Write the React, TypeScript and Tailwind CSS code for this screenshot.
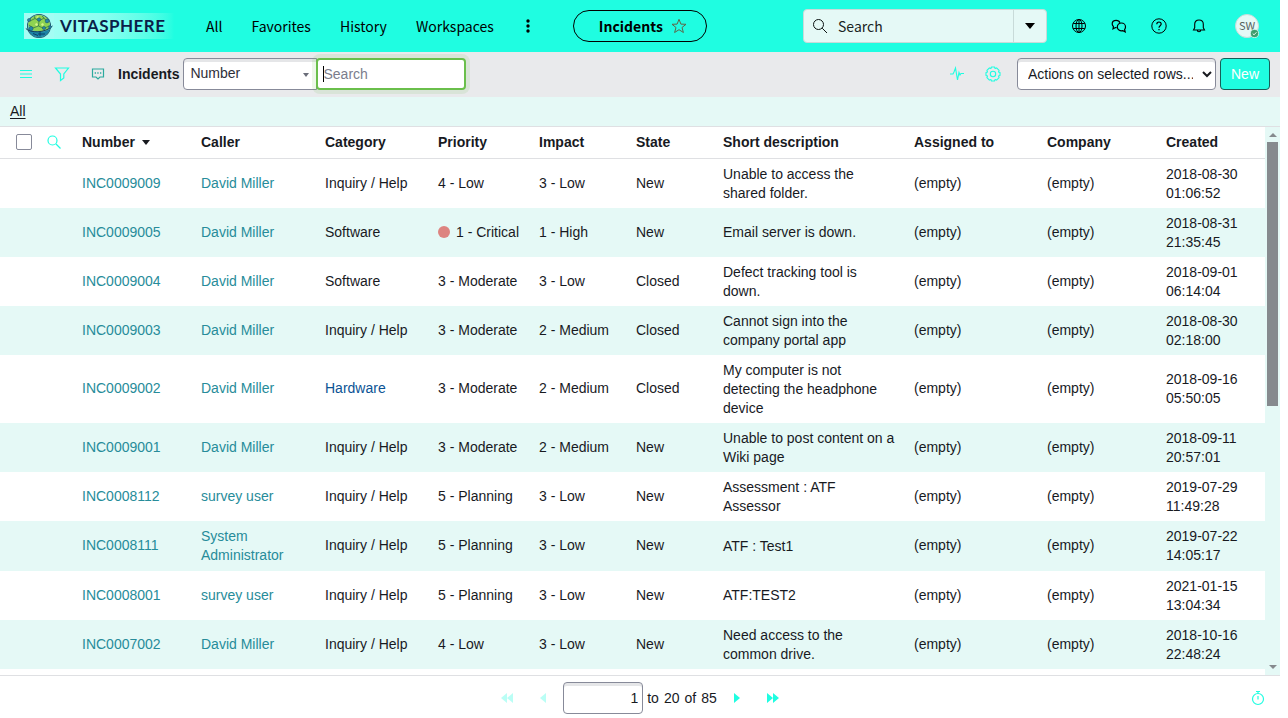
import React from "react";

const rows = [
  ["INC0009009", "David Miller", "Inquiry / Help", "4 - Low", "3 - Low", "New", "Unable to access the shared folder.", "2018-08-30 01:06:52"],
  ["INC0009005", "David Miller", "Software", "1 - Critical", "1 - High", "New", "Email server is down.", "2018-08-31 21:35:45"],
  ["INC0009004", "David Miller", "Software", "3 - Moderate", "3 - Low", "Closed", "Defect tracking tool is down.", "2018-09-01 06:14:04"],
  ["INC0009003", "David Miller", "Inquiry / Help", "3 - Moderate", "2 - Medium", "Closed", "Cannot sign into the company portal app", "2018-08-30 02:18:00"],
  ["INC0009002", "David Miller", "Hardware", "3 - Moderate", "2 - Medium", "Closed", "My computer is not detecting the headphone device", "2018-09-16 05:50:05"],
  ["INC0009001", "David Miller", "Inquiry / Help", "3 - Moderate", "2 - Medium", "New", "Unable to post content on a Wiki page", "2018-09-11 20:57:01"],
  ["INC0008112", "survey user", "Inquiry / Help", "5 - Planning", "3 - Low", "New", "Assessment : ATF Assessor", "2019-07-29 11:49:28"],
  ["INC0008111", "System Administrator", "Inquiry / Help", "5 - Planning", "3 - Low", "New", "ATF : Test1", "2019-07-22 14:05:17"],
  ["INC0008001", "survey user", "Inquiry / Help", "5 - Planning", "3 - Low", "New", "ATF:TEST2", "2021-01-15 13:04:34"],
  ["INC0007002", "David Miller", "Inquiry / Help", "4 - Low", "3 - Low", "New", "Need access to the common drive.", "2018-10-16 22:48:24"],
];

const headings = ["Caller", "Category", "Priority", "Impact", "State", "Short description", "Assigned to", "Company", "Created"];

function Icon({ className = "size-4", strokeWidth = 1, children }: { className?: string; strokeWidth?: number; children: React.ReactNode }) {
  return (
    <svg viewBox="0 0 16 16" className={className} fill="none" stroke="currentColor" strokeWidth={strokeWidth} aria-hidden="true">
      {children}
    </svg>
  );
}

function IconButton({ label, className, children }: { label: string; className: string; children: React.ReactNode }) {
  return (
    <button type="button" aria-label={label} className={`flex shrink-0 items-center justify-center ${className}`}>
      {children}
    </button>
  );
}

function Logo() {
  return (
    <a href="#" className="flex h-[26px] w-[150px] shrink-0 items-center bg-linear-to-r from-[#a9fff5] via-[#8cfff1] to-[#1ffde1]">
      <svg viewBox="0 0 30 26" className="h-[26px] w-[30px] shrink-0" aria-hidden="true">
        <rect width="30" height="26" fill="#a4fdf4" />
        <circle cx="15" cy="13" r="12" fill="#174a63" />
        <circle cx="15" cy="13" r="11.2" fill="#62c3c9" />
        <path d="M4 11C6 4 12 1.800 15 1.900C20 1.900 25 5.500 26 11L24 17L15 18.500L6 17Z" fill="#8fd352" />
        <path d="M4 16C10 19.500 19 20 26 16C24 21 20 24.200 15 24.200C10 24.200 6 21 4 16Z" fill="#1b83a6" />
        <path d="M6 8L11 5.500L15 8L20 5L24 10M15 8L14.500 13L9 15L5 12M14.500 13L20 15.500L25 13M11 5.500L10 3M20 5L18 3" stroke="#2a6a4c" strokeWidth=".7" fill="none" />
        <path d="M1.800 15.500C6 20 21 20.500 28.500 13" stroke="#123d59" strokeWidth="1" fill="none" />
        <path d="M9 20.500L14 22.500M14 21L21 21M16 19v4" stroke="#0b3f68" strokeWidth="1" />
        <g fill="#2388a8" stroke="#123d59" strokeWidth=".4">
          <circle cx="5" cy="7" r="1.600" /><circle cx="15" cy="6.500" r="1.700" /><circle cx="7" cy="15.500" r="2.100" />
          <circle cx="23" cy="8" r="1.900" /><circle cx="26" cy="14" r="1.400" /><circle cx="20" cy="15" r="1.600" />
        </g>
        <path d="M11 11l2-1 1 2-2 1zM17 11l2-1 1 2-2 1zM12 4l2-1 1 1-2 1z" fill="#d6f58a" />
      </svg>
      <span className="pl-[6px] font-['Lato'] text-[17px] leading-5 font-bold tracking-wide text-[#0b1f49]">VITASPHERE</span>
    </a>
  );
}

function TopBar() {
  return (
    <header className="flex h-[52px] shrink-0 items-center bg-[#1ffde1] pl-6 font-['Noto_Sans_CJK_SC',sans-serif] text-sm text-[#0b1211]">
      <Logo />
      <nav className="ml-8 flex items-center gap-[29px] whitespace-nowrap text-black">
        <a href="#">All</a>
        <a href="#">Favorites</a>
        <a href="#">History</a>
        <a href="#">Workspaces</a>
        <IconButton label="More" className="w-[10px]">
          <svg viewBox="0 0 4 14" className="h-[14px] w-1" fill="currentColor" aria-hidden="true">
            <circle cx="2" cy="2" r="1.700" /><circle cx="2" cy="7" r="1.700" /><circle cx="2" cy="12" r="1.700" />
          </svg>
        </IconButton>
      </nav>
      <button type="button" className="ml-10 flex h-8 w-[134px] shrink-0 items-center justify-center gap-2 rounded-full border border-black pl-[6px] font-bold text-black">
        Incidents
        <Icon className="size-4 text-[#5f6548]">
          <path d="M8 1.300L9.900 6.100L15 6.300L11 9.500L12.400 14.500L8 11.700L3.600 14.500L5 9.500L1 6.300L6.100 6.100Z" />
        </Icon>
      </button>
      <div className="ml-auto flex h-[34px] w-[244px] shrink-0 items-stretch rounded border border-[#c8dbd9] bg-[#e5f9f6]">
        <label className="flex min-w-0 flex-1 items-center gap-[10px] pl-2">
          <Icon className="size-4 shrink-0"><circle cx="6.500" cy="6.500" r="5" /><path d="M10.200 10.200L15 15" /></Icon>
          <input aria-label="Global search" placeholder="Search" className="w-full min-w-0 bg-transparent outline-none placeholder:text-[#1a2423]" />
        </label>
        <IconButton label="Search options" className="w-[33px] border-l border-[#c8dbd9]">
          <svg viewBox="0 0 10 6" className="h-[6px] w-[10px]" fill="black" aria-hidden="true"><path d="M0 0h10L5 6z" /></svg>
        </IconButton>
      </div>
      <div className="ml-4 flex shrink-0 items-center text-black">
        <IconButton label="Language" className="size-8">
          <Icon><circle cx="8" cy="8" r="6.500" /><ellipse cx="8" cy="8" rx="3" ry="6.500" /><path d="M8 1.500v13M2.200 5.500h11.600M2.200 10.500h11.600" /></Icon>
        </IconButton>
        <IconButton label="Conversations" className="ml-2 size-8">
          <Icon strokeWidth={1.2}><path d="M5.600 9.600L4.500 9.500L2 10.800L2.400 8.500C1.600 7.700 1.200 6.800 1.200 5.900C1.200 3.800 2.900 2.300 5.200 2.300C7 2.300 8.400 3.200 8.900 4.700" /><path d="M10.400 5C12.700 5 14.500 6.700 14.500 8.900C14.500 9.900 14.200 10.700 13.600 11.400L14.200 13.900L11.800 12.700C8.800 13.300 6.300 11.600 6.300 8.900C6.300 6.700 8.100 5 10.400 5Z" /></Icon>
        </IconButton>
        <IconButton label="Help" className="ml-2 size-8">
          <Icon><circle cx="8" cy="8" r="7.200" /><path d="M5.800 6.200C5.800 3.300 10.200 3.300 10.200 6.100C10.200 7.800 8 7.800 8 9.700M8 11v1.300" strokeWidth="1.200" /></Icon>
        </IconButton>
        <IconButton label="Notifications" className="ml-2 size-8">
          <Icon strokeWidth={1.1}><path d="M2.500 12L3.700 9.700V6.200C3.700 3.700 5.500 2 8 2C10.500 2 12.300 3.700 12.300 6.200V9.700L13.500 12ZM6.300 12.300C6.300 14.300 9.700 14.300 9.700 12.300" /></Icon>
        </IconButton>
      </div>
      <button type="button" aria-label="User menu" className="relative mr-[21px] ml-5 flex size-6 shrink-0 items-center justify-center rounded-full border border-[#c8dbd9] bg-[#e5f9f6] text-[11px] text-[#566361]">
        SW
        <svg viewBox="0 0 10 10" className="absolute -right-px -bottom-px size-[9px]" aria-hidden="true">
          <circle cx="5" cy="5" r="4.500" fill="#3c9d6c" stroke="#d3f4ec" /><path d="M3 5l1.500 1.500L7.200 3.600" fill="none" stroke="white" />
        </svg>
      </button>
    </header>
  );
}

function ListToolbar() {
  const field = "h-8 shrink-0 border border-[#878a99] bg-white text-sm shadow-[inset_0_3px_0_#e5e6e8]";
  return (
    <div className="flex h-[45px] shrink-0 items-center bg-[#e9eaec] px-[10px] pb-[2px] text-[#1ffde1]">
      <IconButton label="List menu" className="size-8"><Icon strokeWidth={1.2}><path d="M2 4.500h12M2 8h12M2 11.500h12" /></Icon></IconButton>
      <IconButton label="Filter" className="ml-1 size-8"><Icon strokeWidth={1.2}><path d="M1.500 2h13L9.800 8v4L6.500 14.500V8Z" /></Icon></IconButton>
      <IconButton label="Activity" className="ml-1 size-8 text-[#2baa9e]"><Icon strokeWidth={1.2}><path d="M2.500 3h11v8H10L8 13L6 11H2.500Z" /><path d="M4.700 7h1.300M7.300 7h1.300M10 7h1.300" strokeWidth="1.400" /></Icon></IconButton>
      <h1 className="ml-1 text-sm font-bold text-[#181a1f]">Incidents</h1>
      <div className="relative ml-1 flex">
        <select aria-label="Search field" className={`${field} w-[134px] appearance-none rounded-l px-[6px] pb-[2px] text-[#2e2e38]`}><option>Number</option></select>
        <svg viewBox="0 0 6 4" className="pointer-events-none absolute top-[15px] right-2 h-[4px] w-[6px]" fill="#6a6d79" aria-hidden="true"><path d="M0 0h6L3 4z" /></svg>
      </div>
      <div className="relative flex">
        <input aria-label="Search list" placeholder="Search" className="-ml-px h-8 w-[150px] rounded border-2 border-[#6abf4b] bg-white px-[5px] text-sm text-[#181a1f] shadow-[0_0_0_4px_rgba(106,191,75,0.12)] outline-none placeholder:text-[#7b7d8c]" />
        <span aria-hidden="true" className="absolute top-2 left-[6px] h-4 w-px bg-black" />
      </div>
      <div className="ml-auto flex items-center">
        <IconButton label="Activity stream" className="size-8"><Icon strokeWidth={1.1}><path d="M1 8h3l1-2 1.500-4L8.500 14L10 6.500L11 9l1-1.500h3" /></Icon></IconButton>
        <IconButton label="List settings" className="ml-1 size-8">
          <Icon strokeWidth={1.1}><path d="M6.500 1h3l.6 1.500 1.500-.6 2.500 2.500-.6 1.500L15 6.500v3l-1.500.6.6 1.500-2.500 2.500-1.500-.6L9.500 15h-3l-.6-1.500-1.500.6-2.500-2.500.6-1.500L1 9.500v-3l1.500-.6-.6-1.500 2.500-2.500 1.500.6Z" strokeLinejoin="round" /><circle cx="8" cy="8" r="2.700" /></Icon>
        </IconButton>
      </div>
      <select aria-label="Actions" className={`${field} ml-2 w-[199px] rounded px-[6px] text-[#181a1f]`}><option>Actions on selected rows...</option></select>
      <button type="button" className="ml-1 h-8 w-[50px] shrink-0 rounded border border-[#165f59] bg-[#1ffde1] text-sm text-white">New</button>
    </div>
  );
}

function IncidentTable() {
  return (
    <table className="w-full table-fixed border-collapse text-left text-sm leading-[19px] text-[#181a1f]">
      <colgroup>
        <col className="w-[42px]" /><col className="w-[32px]" /><col className="w-[119px]" /><col className="w-[124px]" />
        <col className="w-[113px]" /><col className="w-[101px]" /><col className="w-[97px]" /><col className="w-[87px]" />
        <col className="w-[191px]" /><col className="w-[133px]" /><col className="w-[119px]" /><col className="w-[107px]" />
      </colgroup>
      <thead>
        <tr className="h-[31px] border-b border-[#dfe0e3]">
          <th className="pl-4"><input type="checkbox" aria-label="Select all rows" className="block size-4 appearance-none rounded-xs border border-[#878a99] bg-white" /></th>
          <th><IconButton label="Search columns" className="ml-1 text-[#1ffde1]"><Icon strokeWidth={1.2}><circle cx="6.500" cy="6.500" r="4.500" /><path d="M10 10L14.500 14.500" /></Icon></IconButton></th>
          <th className="px-2">
            <a href="#" className="flex items-center gap-[7px]">Number
              <svg viewBox="0 0 8 5" className="h-[5px] w-2" fill="currentColor" aria-hidden="true"><path d="M0 0h8L4 5z" /></svg>
            </a>
          </th>
          {headings.map((h) => <th key={h} className="px-2"><a href="#">{h}</a></th>)}
        </tr>
      </thead>
      <tbody>
        {rows.map(([number, caller, category, priority, impact, state, description, created]) => (
          <tr key={number} className="even:bg-[#e5f9f6]">
            <td /><td />
            <td className="px-2"><a href="#" className="text-[#278c9a]">{number}</a></td>
            <td className="px-2 py-[6px]"><a href="#" className="text-[#278c9a]">{caller}</a></td>
            <td className={category === "Hardware" ? "px-2 text-[#0b5394]" : "px-2"}>{category}</td>
            <td className="pl-2 whitespace-nowrap">
              {priority === "1 - Critical" && <span className="mr-[6px] inline-block size-3 rounded-full bg-[#dd8480] align-[-1px]" />}
              {priority}
            </td>
            <td className="px-2">{impact}</td>
            <td className="px-2">{state}</td>
            <td className="pt-[6px] pr-[10px] pb-[5px] pl-2">{description}</td>
            <td className="px-2">(empty)</td>
            <td className="px-2">(empty)</td>
            <td className="px-2 pt-[6px] pb-[5px]">{created}</td>
          </tr>
        ))}
      </tbody>
    </table>
  );
}

function ScrollTrack() {
  return (
    <div aria-hidden="true" className="flex w-[15px] shrink-0 flex-col items-center bg-[#e5f9f6] py-[6px]">
      <svg viewBox="0 0 8 4" className="h-1 w-2 shrink-0" fill="#868a8e"><path d="M0 4h8L4 0z" /></svg>
      <div className="my-[5px] flex min-h-0 w-[11px] flex-1 flex-col"><div className="h-[51%] bg-[#868a8e]" /></div>
      <svg viewBox="0 0 8 4" className="h-1 w-2 shrink-0" fill="#868a8e"><path d="M0 0h8L4 4z" /></svg>
    </div>
  );
}

function Pager() {
  return (
    <footer className="flex h-[43px] shrink-0 items-center border-t border-[#dfe0e3] pt-[2px] pr-[14px] text-sm text-[#181a1f]">
      <div className="flex flex-1 items-center justify-center pl-[30px]">
        <IconButton label="First page" className="w-9 text-[#1ffde1] opacity-30"><svg viewBox="0 0 12 10" className="h-[10px] w-3" fill="currentColor"><path d="M6 0v10L0 5zM12 0v10L6 5z" /></svg></IconButton>
        <IconButton label="Previous page" className="mr-[2px] w-9 text-[#1ffde1] opacity-30"><svg viewBox="0 0 6 10" className="h-[10px] w-[6px]" fill="currentColor"><path d="M6 0v10L0 5z" /></svg></IconButton>
        <input aria-label="Skip to row" defaultValue="1" className="h-8 w-20 rounded border border-[#878a99] bg-white px-1 text-right shadow-[inset_0_3px_0_#e5e6e8]" />
        <span className="ml-1 flex gap-[5px] whitespace-nowrap"><span>to</span><span>20</span><span>of</span><span>85</span></span>
        <IconButton label="Next page" className="ml-[2px] w-9 text-[#1ffde1]"><svg viewBox="0 0 6 10" className="h-[10px] w-[6px]" fill="currentColor"><path d="M0 0v10l6-5z" /></svg></IconButton>
        <IconButton label="Last page" className="w-9 text-[#1ffde1]"><svg viewBox="0 0 12 10" className="h-[10px] w-3" fill="currentColor"><path d="M0 0v10l6-5zM6 0v10l6-5z" /></svg></IconButton>
      </div>
      <IconButton label="Response time" className="text-[#1ffde1]">
        <Icon strokeWidth={1.2}><circle cx="8" cy="9" r="5.500" /><path d="M6 1.500h4M8 1.500v2M8 6v3.500" /></Icon>
      </IconButton>
    </footer>
  );
}

export default function App() {
  return (
    <div className="h-screen bg-white pr-2">
      <div className="flex h-full flex-col overflow-hidden font-['Liberation_Sans',Arial,sans-serif]">
        <TopBar />
        <ListToolbar />
        <div className="flex h-[30px] shrink-0 items-center border-b border-[#dfe0e3] bg-[#e5f9f6] px-[10px] pb-[2px] text-sm text-[#181a1f]">
          <a href="#" className="underline underline-offset-2">All</a>
        </div>
        <main className="flex min-h-0 flex-1">
          <div className="min-w-0 flex-1 overflow-hidden"><IncidentTable /></div>
          <ScrollTrack />
        </main>
        <Pager />
      </div>
    </div>
  );
}
